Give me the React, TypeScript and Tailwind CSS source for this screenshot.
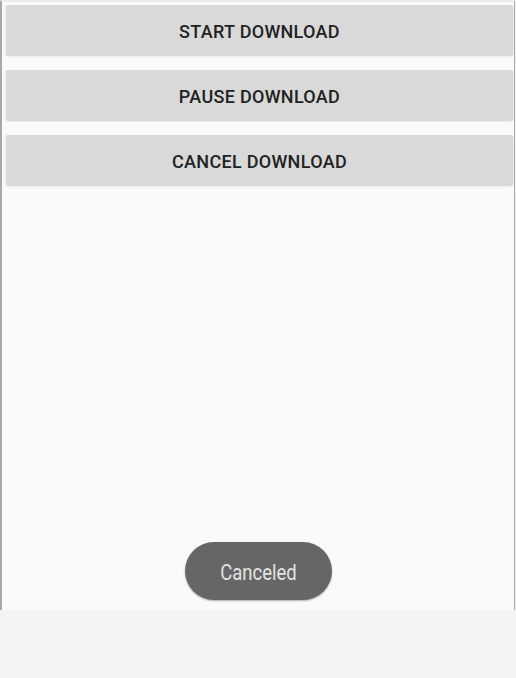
export default function App() {
  const buttons = ["START DOWNLOAD", "PAUSE DOWNLOAD", "CANCEL DOWNLOAD"];
  return (
    <div className="w-[516px] h-[678px] bg-[#f4f4f4] font-['Roboto',sans-serif]">
      <div className="w-[515px] h-[610px] bg-[#fafafa] border-l-2 border-r border-[#a8a8a8] border-t-2 border-t-[#ececec] flex flex-col pl-[4px] pr-[1px] pt-[3px]">
        <div className="flex flex-col gap-[15px]">
          {buttons.map((label) => (
            <div
              key={label}
              className="h-[50px] pt-[3px] rounded-[2px] bg-[#d8d9d8] shadow-[0_1px_2px_rgba(0,0,0,0.18)] flex items-center justify-center text-[18px] font-medium text-[#222] tracking-[0.3px]"
            >
              {label}
            </div>
          ))}
        </div>
        <div className="mt-auto mb-[10px] self-center ml-[-2px] w-[147px] h-[58px] rounded-full bg-[#666] shadow-[0_1px_2px_rgba(0,0,0,0.3)] flex items-center justify-center pt-[2px] text-[#e4e4e4]">
          <span className="inline-block text-[22px] scale-x-[0.84]">Canceled</span>
        </div>
      </div>
    </div>
  );
}
